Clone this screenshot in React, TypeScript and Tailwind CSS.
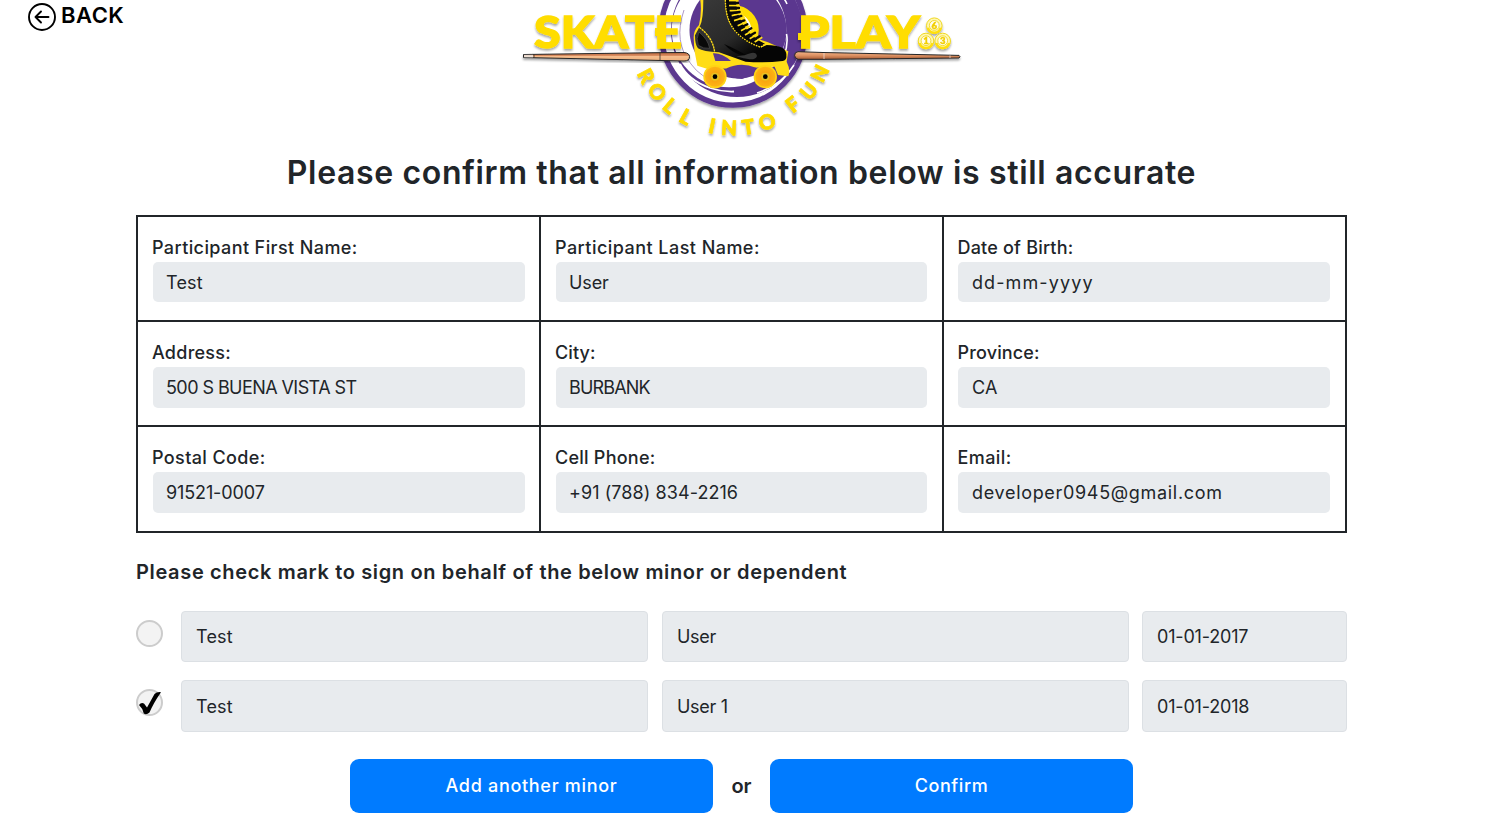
import React from "react";

const arcLetters: [string, number, number, number][] = [
  ["R", 646, 76, 62],
  ["O", 657, 92, 51],
  ["L", 670, 106, 40],
  ["L", 686, 117, 29],
  ["I", 712, 126, 12],
  ["N", 729, 128, 3],
  ["T", 748, 127, -8],
  ["O", 767, 122, -20],
  ["F", 793, 104.5, -38],
  ["U", 809, 91, -50],
  ["N", 820, 73.5, -63],
];

function Ball({ x, y, n }: { x: number; y: number; n: string }) {
  return (
    <g>
      <circle cx={x} cy={y} r="7.8" fill="#fff7b0" stroke="#f0d820" strokeWidth="1" />
      <path d={`M${x - 6.4} ${y + 2}a6.6 6.6 0 0 0 12.8 0`} fill="none" stroke="#ffdf10" strokeWidth="2.6" />
      <circle cx={x} cy={y - 0.3} r="4.9" fill="#fffdf0" stroke="#f0d820" strokeWidth="0.9" />
      <text x={x} y={y + 3} textAnchor="middle" fontSize="9.5" fontWeight="900" fill="#f2cf00" stroke="#f2cf00" strokeWidth="0.4">{n}</text>
    </g>
  );
}

function Logo() {
  return (
    <svg
      width="464"
      height="145"
      viewBox="510 0 464 145"
      fontFamily="Lato, sans-serif"
      className="block"
      role="img"
      aria-label="Skate Play"
    >
      <defs>
        <filter id="soft" x="-10%" y="-10%" width="120%" height="130%">
          <feDropShadow dx="0" dy="2" stdDeviation="1" floodColor="#000" floodOpacity="0.35" />
        </filter>
        <linearGradient id="cue" x1="0" y1="0" x2="0" y2="1">
          <stop offset="0" stopColor="#b5653c" />
          <stop offset="0.35" stopColor="#d98a5c" />
          <stop offset="0.45" stopColor="#f5bd8d" />
          <stop offset="1" stopColor="#f0b07c" />
        </linearGradient>
        <linearGradient id="cueRight" x1="0" y1="0" x2="0" y2="1">
          <stop offset="0" stopColor="#f4b487" />
          <stop offset="0.5" stopColor="#dc9163" />
          <stop offset="1" stopColor="#a95c35" />
        </linearGradient>
        <linearGradient id="boot" x1="0" y1="0" x2="1" y2="1">
          <stop offset="0" stopColor="#3a3a3a" />
          <stop offset="0.5" stopColor="#292929" />
          <stop offset="0.75" stopColor="#050505" />
        </linearGradient>
        <radialGradient id="wheel">
          <stop offset="0" stopColor="#f59a0c" />
          <stop offset="1" stopColor="#fdb414" />
        </radialGradient>
      </defs>

      <g filter="url(#soft)">
        <ellipse cx="733" cy="31.5" rx="71.8" ry="73.6" fill="#fff" stroke="#5b378f" strokeWidth="5.4" />
      </g>
      <circle cx="737" cy="31" r="66" fill="#5b378f" />
      <circle cx="729" cy="30" r="57.3" fill="#fff" />
      <path d="M680 64Q688 80 710 88Q722 92 734 91.5" fill="none" stroke="#fff" strokeWidth="1.8" />
      <path d="M684 10Q673 42 691 64Q701 78 718 82" fill="none" stroke="#8a6db0" strokeWidth="0.7" />
      <circle cx="738" cy="30" r="48.5" fill="#5b378f" />
      <path d="M782 -3Q785 -1 787 4M786.5 34Q788.5 44 784 56M794 65Q782 85 757 93" fill="none" stroke="#fff" strokeWidth="1.6" />
      <circle cx="734" cy="30" r="21" fill="#fff" stroke="#ffdd00" strokeWidth="7.5" />

      <g transform="translate(630 0) scale(.3333)">
        <path d="M211 0Q216 36 207 75Q191 91 191 112L193 150L202 197L233 207L372 203L434 200L444 225L475 229Q482 208 470 185L475 154L414 127L370 112L322 0Z" fill="#ffdd16" />
        <path d="M220 0H285Q286 66 315 92Q342 128 397 141L410 135Q438 135 457 143Q471 153 469 168Q471 179 458 183Q402 190 347 185L267 157Q219 155 204 145Q195 135 195 106L210 78Q220 58 220 0Z" fill="url(#boot)" />
        <path d="M285 0H317Q322 59 351 90Q372 116 405 131L391 143Q339 128 314 94Q287 59 285 0Z" fill="#080808" />
        <path d="M286 0Q287 62 318 96Q346 126 392 142L407 130" fill="none" stroke="#ffdd16" strokeWidth="4" strokeDasharray="5 3" />
        <path d="M297 2H326M297 17H328M299 32H332M305 47L334 40M312 62L341 53M323 77L348 66M333 92L359 78M345 105L371 90M359 116L382 103M374 126L397 112" fill="none" stroke="#ffdd16" strokeWidth="5" />
        <path d="M296 9H324M297 24H327M301 40L329 36M308 55L334 48M317 70L343 61M328 85L352 73M339 99L364 85M352 111L375 98M366 122L389 109" fill="none" stroke="#090909" strokeWidth="7" strokeLinecap="round" />
        <path d="M208 82Q249 113 254 157" fill="none" stroke="#ffdd16" strokeWidth="4" strokeDasharray="7 2" />
        <path d="M207 96Q197 116 205 136Q220 147 239 145Q234 118 207 96Z" fill="#090909" stroke="#505050" strokeWidth="2" />
        <path d="M282 132Q326 151 348 166L329 164Q304 155 282 132Z" fill="#050505" />
        <path d="M344 166Q378 149 381 168Q378 179 359 178Q342 176 319 169Z" fill="#353535" />
        <path d="M249 160Q275 158 303 183H256Z" fill="#5b378f" />
        <path d="M290 205Q331 185 378 203Q369 230 336 237Q305 235 290 222Z" fill="#5b378f" />
        <circle cx="255" cy="230" r="35" fill="#ffd414" />
        <circle cx="255" cy="230" r="30" fill="url(#wheel)" />
        <circle cx="255" cy="230" r="12" fill="#e8c221" />
        <circle cx="255" cy="230" r="7" fill="#000" />
        <circle cx="406" cy="230" r="35" fill="#ffd414" />
        <circle cx="406" cy="230" r="30" fill="url(#wheel)" />
        <circle cx="406" cy="230" r="12" fill="#e8c221" />
        <circle cx="406" cy="230" r="7" fill="#000" />
      </g>

      <g filter="url(#soft)">
        <path d="M523.5 54.5L655 52.7L684 52.5Q689.5 53 689.5 56.7Q689.5 61 684 61L640 60L523.5 57.5Z" fill="url(#cue)" stroke="#252525" strokeWidth="1" />
        <path d="M534 54V58M660 53V60" stroke="#35302d" strokeWidth="0.8" />
        <path d="M524 54.8h9v2.6h-9z" fill="#eee" opacity="0.75" />
        <path d="M798 51.7L823 52.5L959 55.4Q961 56.7 959 58L824 59.3L798 59.3Q794.6 58 794.6 55.4Q794.6 52 798 51.7Z" fill="url(#cueRight)" stroke="#252525" strokeWidth="1" />
        <path d="M824 53V59M950 55.4V58" stroke="#eedbd0" strokeWidth="0.8" />
      </g>

      <g filter="url(#soft)" fill="#ffdd00" stroke="#ffdd00" fontWeight="900">
        <text x="534" y="48" fontSize="43" strokeWidth="1.3" textLength="148" lengthAdjust="spacingAndGlyphs">SKATE</text>
        <text x="798" y="48" fontSize="43" strokeWidth="1.3" textLength="122" lengthAdjust="spacingAndGlyphs">PLAY</text>
        <path d="M655 28h7v8h-7zM798 33h7v7h-7z" stroke="none" />
        {arcLetters.map(([c, x, y, r], i) => (
          <text key={i} transform={`translate(${x} ${y}) rotate(${r})`} y="7.2" textAnchor="middle" fontSize="20.5" strokeWidth="0.7">
            {c}
          </text>
        ))}
      </g>
      <g filter="url(#soft)">
        <Ball x={934.3} y={25.7} n="6" />
        <Ball x={926} y={41} n="1" />
        <Ball x={942.7} y={41} n="3" />
      </g>
    </svg>
  );
}

const fields = [
  ["Participant First Name:", "Test", "tracking-[0.4px]", "tracking-[0.2px]"],
  ["Participant Last Name:", "User", "tracking-[0.46px]", "tracking-[-0.1px]"],
  ["Date of Birth:", "dd-mm-yyyy", "tracking-[0.2px]", "tracking-[1.1px]"],
  ["Address:", "500 S BUENA VISTA ST", "tracking-[0.25px]", "tracking-[-0.57px]"],
  ["City:", "BURBANK", "tracking-[0.1px]", "tracking-[-0.85px]"],
  ["Province:", "CA", "tracking-[0.15px]", "tracking-[0.3px]"],
  ["Postal Code:", "91521-0007", "tracking-[0.38px]", "tracking-[-0.12px]"],
  ["Cell Phone:", "+91 (788) 834-2216", "tracking-[0.24px]", "tracking-[0.07px]"],
  ["Email:", "developer0945@gmail.com", "tracking-[0.4px]", "tracking-[0.68px]"],
];

const columnPadding = ["pl-[15px] pr-[14px]", "px-[15px]", "pl-[14px] pr-[15px]"];

const minors = [
  { first: "Test", last: "User", dob: "01-01-2017", checked: false, height: "h-[51px]", text: "pt-0" },
  { first: "Test", last: "User 1", dob: "01-01-2018", checked: true, height: "h-[52px]", text: "pt-[2px]" },
];

function MinorBox({ children, className }: { children: string; className: string }) {
  return (
    <div className={`flex h-full items-center rounded-[4px] border border-[#dce0e4] bg-[#e8ebee] px-[14px] text-[18px] leading-none ${className}`}>
      {children}
    </div>
  );
}

export default function App() {
  return (
    <div className="h-[820px] w-[1483px] overflow-hidden bg-white font-['Inter',sans-serif] text-[#212529]">
      <header className="grid h-[145px] grid-cols-[510px_464px_1fr]">
        <a className="flex h-[31px] items-center gap-[4px] pt-[2px] pl-[27px] text-black">
          <svg width="30" height="30" viewBox="0 0 30 30" fill="none" stroke="currentColor" strokeWidth="1.9" strokeLinecap="round" strokeLinejoin="round">
            <circle cx="15" cy="15" r="13" />
            <path d="M21.5 15H8.5M14 9.5L8.5 15L14 20.5" />
          </svg>
          <span className="pb-[3px] text-[22px] leading-none font-semibold tracking-[0.5px]">BACK</span>
        </a>
        <Logo />
      </header>

      <h1 className="mt-[7px] text-center text-[32px] leading-[42px] font-semibold tracking-[0.65px] whitespace-nowrap">
        Please confirm that all information below is still accurate
      </h1>

      <main className="mx-[136px]">
        <section className="mt-[21px] grid h-[318px] grid-cols-[401px_401px_401px] grid-rows-[103px_103px_104px] gap-[2px] border-2 border-[#212529] bg-[#212529]">
          {fields.map(([label, value, lt, vt], i) => (
            <div key={label} className={`bg-white pt-[19px] ${columnPadding[i % 3]}`}>
              <div className={`h-[26px] text-[18px] leading-[24px] font-medium whitespace-nowrap ${i % 3 === 2 ? "-ml-[0.5px]" : "-ml-px"} ${lt}`}>{label}</div>
              <div
                className={`flex items-center rounded-[5px] bg-[#e8ebee] pt-px text-[18px] leading-none whitespace-nowrap ${i < 3 ? "h-[40px]" : "h-[41px]"} ${i % 3 === 2 ? "pl-[14px]" : "pl-[13px]"} ${vt}`}
              >
                {value}
              </div>
            </div>
          ))}
        </section>

        <h2 className="mt-[24px] text-[20px] leading-[30px] font-semibold tracking-[0.65px] whitespace-nowrap">
          Please check mark to sign on behalf of the below minor or dependent
        </h2>

        <section className="mt-[24px] flex flex-col gap-[18px]">
          {minors.map((m) => (
            <div key={m.dob} className={`flex ${m.height}`}>
              <div className="mt-[9px] mr-[18px] flex size-[27px] shrink-0 items-center justify-center rounded-full border-2 border-[#ccc] bg-[#f3f3f3]">
                {m.checked && (
                  <svg width="23" height="24" viewBox="0 0 23 24" className="shrink-0">
                    <path d="M1 14Q3 11 6 12.4L9 16.5L16.5 3Q19 .6 23 1.2Q15.5 12 11.5 21.5Q8.5 24.2 5.8 22.5Q4.5 17 1 14Z" fill="#000" />
                  </svg>
                )}
              </div>
              <MinorBox className={`mr-[14px] w-[467px] tracking-[0.2px] ${m.text}`}>{m.first}</MinorBox>
              <MinorBox className={`mr-[13px] w-[467px] tracking-[-0.3px] ${m.text}`}>{m.last}</MinorBox>
              <MinorBox className={`w-[205px] tracking-[-0.18px] ${m.text}`}>{m.dob}</MinorBox>
            </div>
          ))}
        </section>

        <div className="mt-[27px] flex h-[54px] items-center justify-center text-[18px] leading-none font-medium">
          <button className="h-[54px] w-[363px] rounded-[9px] bg-[#007bff] tracking-[0.7px] text-white">Add another minor</button>
          <span className="w-[57px] text-center text-[20px] font-semibold">or</span>
          <button className="h-[54px] w-[363px] rounded-[9px] bg-[#007bff] tracking-[0.6px] text-white">Confirm</button>
        </div>
      </main>
    </div>
  );
}
